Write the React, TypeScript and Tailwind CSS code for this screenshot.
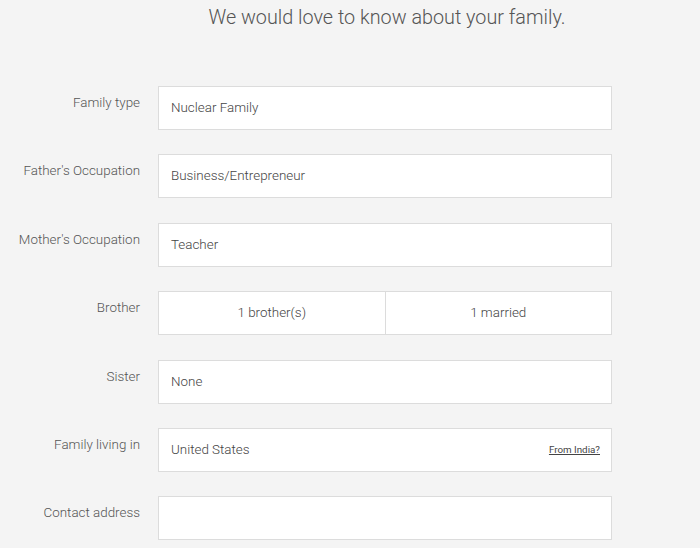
import React from 'react'

const rows: { label: string; value?: string }[] = [
  { label: 'Family type', value: 'Nuclear Family' },
  { label: "Father's Occupation", value: 'Business/Entrepreneur' },
  { label: "Mother's Occupation", value: 'Teacher' },
]

function Label({ children }: { children: React.ReactNode }) {
  return (
    <div className="w-[140px] shrink-0 pt-[7px] text-right text-[13.4px] font-light leading-5 text-[#555]">
      {children}
    </div>
  )
}

function Box({ children }: { children?: React.ReactNode }) {
  return (
    <div className="flex h-[44px] w-[454px] items-center border border-[#dcdcdc] bg-white px-3 text-[13.4px] font-light text-[#444]">
      {children}
    </div>
  )
}

export default function App() {
  return (
    <div
      className="min-h-[548px] w-[700px] overflow-hidden bg-[#f4f4f4]"
      style={{ fontFamily: 'Roboto, "Liberation Sans", sans-serif' }}
    >
      <div className="flex pt-[6px]">
        <div className="w-[162px] shrink-0" />
        <h1 className="w-[450px] text-center text-[19.8px] font-light leading-6 text-[#555]">
          We would love to know about your family.
        </h1>
      </div>

      <div className="mt-[56px] flex flex-col gap-[24.4px]">
        {rows.map((r) => (
          <div key={r.label} className="flex gap-[18px]">
            <Label>{r.label}</Label>
            <Box>{r.value}</Box>
          </div>
        ))}

        <div className="flex gap-[18px]">
          <Label>Brother</Label>
          <div className="flex h-[44px] w-[454px] border border-[#dcdcdc] bg-white text-[13.4px] font-light text-[#444]">
            <div className="flex flex-1 items-center justify-center border-r border-[#dcdcdc]">1 brother(s)</div>
            <div className="flex flex-1 items-center justify-center">1 married</div>
          </div>
        </div>

        <div className="flex gap-[18px]">
          <Label>Sister</Label>
          <Box>None</Box>
        </div>

        <div className="flex gap-[18px]">
          <Label>Family living in</Label>
          <Box>
            <span className="flex-1">United States</span>
            <span className="mr-[-1px] text-[9.8px] font-normal text-[#444] underline">From India?</span>
          </Box>
        </div>

        <div className="flex gap-[18px]">
          <Label>Contact address</Label>
          <Box />
        </div>
      </div>
    </div>
  )
}
